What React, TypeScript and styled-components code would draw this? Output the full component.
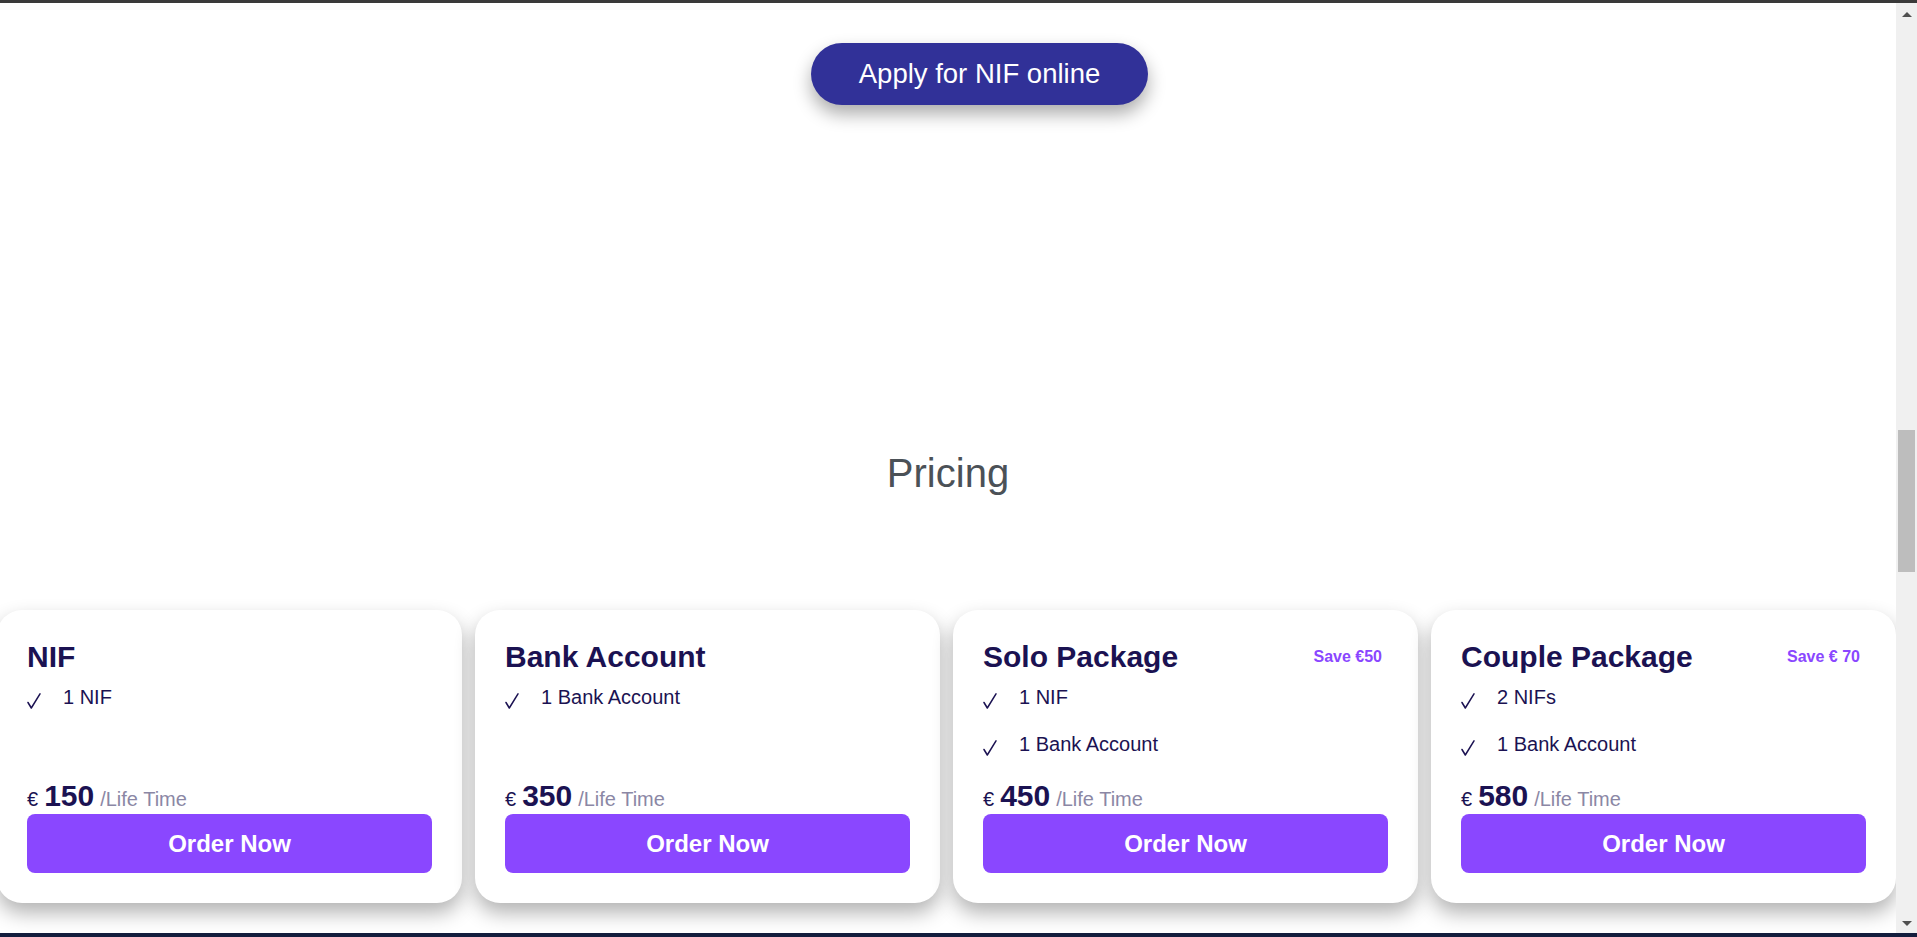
import React from "react";
import styled, { createGlobalStyle } from "styled-components";

const GlobalStyle = createGlobalStyle`
  html, body {
    margin: 0;
    padding: 0;
    background: #ffffff;
    font-family: "Liberation Sans", Arial, sans-serif;
  }
  * {
    box-sizing: border-box;
  }
`;

const Screen = styled.div`
  display: flex;
  flex-direction: column;
  width: 1917px;
  height: 937px;
  overflow: hidden;
`;

const TopEdge = styled.div`
  height: 3px;
  background: #3a3a3a;
  flex-shrink: 0;
`;

const BottomEdge = styled.div`
  height: 4px;
  background: #131d3d;
  flex-shrink: 0;
`;

const Middle = styled.div`
  display: flex;
  flex: 1;
  min-height: 0;
`;

const Content = styled.main`
  flex: 1;
  min-width: 0;
  overflow: hidden;
  background: #ffffff;
  display: flex;
  flex-direction: column;
`;

const Scrollbar = styled.div`
  width: 21px;
  flex-shrink: 0;
  background: #f0f0f0;
  display: flex;
  flex-direction: column;
  align-items: center;
  padding: 9px 0 7px;
`;

const Arrow = styled.div<{ $down?: boolean }>`
  width: 0;
  height: 0;
  border-left: 5px solid transparent;
  border-right: 5px solid transparent;
  ${({ $down }) =>
    $down ? "border-top: 5px solid #505050;" : "border-bottom: 5px solid #505050;"}
`;

const Track = styled.div`
  flex: 1;
  width: 100%;
  display: flex;
  flex-direction: column;
  align-items: center;
  padding-top: 413px;
`;

const Thumb = styled.div`
  width: 17px;
  height: 142px;
  background: #bdbdbd;
`;

const Hero = styled.section`
  display: flex;
  justify-content: center;
  padding: 40px 0 0 63px;
`;

const ApplyButton = styled.button`
  height: 62px;
  padding: 0 48px;
  border: none;
  border-radius: 31px;
  background: #313198;
  color: #ffffff;
  font-family: "Liberation Sans", Arial, sans-serif;
  font-size: 27.5px;
  box-shadow: 0 9px 18px rgba(0, 0, 0, 0.33);
  cursor: pointer;
`;

const Heading = styled.h2`
  margin: 345px 0 0;
  text-align: center;
  font-size: 40px;
  font-weight: 400;
  line-height: 46px;
  color: #4b5157;
`;

const CardRow = styled.div`
  display: grid;
  grid-template-columns: repeat(4, 465px);
  column-gap: 13px;
  margin: 114px 0 0 -3px;
`;

const Card = styled.article`
  display: flex;
  flex-direction: column;
  padding: 29px 30px 30px;
  background: #ffffff;
  border-radius: 25px;
  box-shadow: 0 10px 20px rgba(0, 0, 0, 0.3);
  color: #1b1252;
`;

const CardHead = styled.div`
  display: flex;
  justify-content: space-between;
  align-items: center;
`;

const Title = styled.h3`
  margin: 0;
  font-size: 30px;
  font-weight: 700;
  line-height: 36px;
`;

const Save = styled.span`
  margin-right: 6px;
  font-size: 16px;
  font-weight: 700;
  color: #8a47ff;
`;

const Features = styled.ul`
  list-style: none;
  margin: 11px 0 25px;
  padding: 0;
  display: flex;
  flex-direction: column;
  gap: 24px;
`;

const Feature = styled.li`
  display: flex;
  align-items: flex-start;
  gap: 22px;
  font-size: 20px;
  line-height: 23px;
`;

const Check = styled.svg`
  width: 14px;
  height: 16px;
  margin-top: 7px;
  flex-shrink: 0;
`;

const Price = styled.div`
  margin-top: auto;
  margin-bottom: 3px;
  display: flex;
  align-items: baseline;
  gap: 6px;
  line-height: 1;
`;

const Currency = styled.span`
  font-size: 20px;
`;

const Amount = styled.span`
  font-size: 30px;
  font-weight: 700;
`;

const Period = styled.span`
  font-size: 20px;
  color: #8b87a5;
`;

const OrderButton = styled.button`
  height: 59px;
  width: 100%;
  border: none;
  border-radius: 8px;
  background: #8a47ff;
  color: #ffffff;
  font-family: "Liberation Sans", Arial, sans-serif;
  font-size: 24px;
  font-weight: 700;
  cursor: pointer;
`;

interface Plan {
  name: string;
  save?: string;
  features: string[];
  price: number;
}

const plans: Plan[] = [
  { name: "NIF", features: ["1 NIF"], price: 150 },
  { name: "Bank Account", features: ["1 Bank Account"], price: 350 },
  { name: "Solo Package", save: "Save €50", features: ["1 NIF", "1 Bank Account"], price: 450 },
  { name: "Couple Package", save: "Save € 70", features: ["2 NIFs", "1 Bank Account"], price: 580 },
];

function CheckMark() {
  return (
    <Check viewBox="0 0 14 16">
      <path d="M1 9.5 L4.3 15 L13 0.8" fill="none" stroke="#1b1252" strokeWidth="1.5" strokeLinecap="round" strokeLinejoin="round" />
    </Check>
  );
}

function PlanCard({ plan }: { plan: Plan }) {
  return (
    <Card>
      <CardHead>
        <Title>{plan.name}</Title>
        {plan.save && <Save>{plan.save}</Save>}
      </CardHead>
      <Features>
        {plan.features.map((f) => (
          <Feature key={f}>
            <CheckMark />
            <span>{f}</span>
          </Feature>
        ))}
      </Features>
      <Price>
        <Currency>€</Currency>
        <Amount>{plan.price}</Amount>
        <Period>/Life Time</Period>
      </Price>
      <OrderButton>Order Now</OrderButton>
    </Card>
  );
}

export default function App() {
  return (
    <>
      <GlobalStyle />
      <Screen>
        <TopEdge />
        <Middle>
          <Content>
            <Hero>
              <ApplyButton>Apply for NIF online</ApplyButton>
            </Hero>
            <Heading>Pricing</Heading>
            <CardRow>
              {plans.map((p) => (
                <PlanCard key={p.name} plan={p} />
              ))}
            </CardRow>
          </Content>
          <Scrollbar>
            <Arrow />
            <Track>
              <Thumb />
            </Track>
            <Arrow $down />
          </Scrollbar>
        </Middle>
        <BottomEdge />
      </Screen>
    </>
  );
}
